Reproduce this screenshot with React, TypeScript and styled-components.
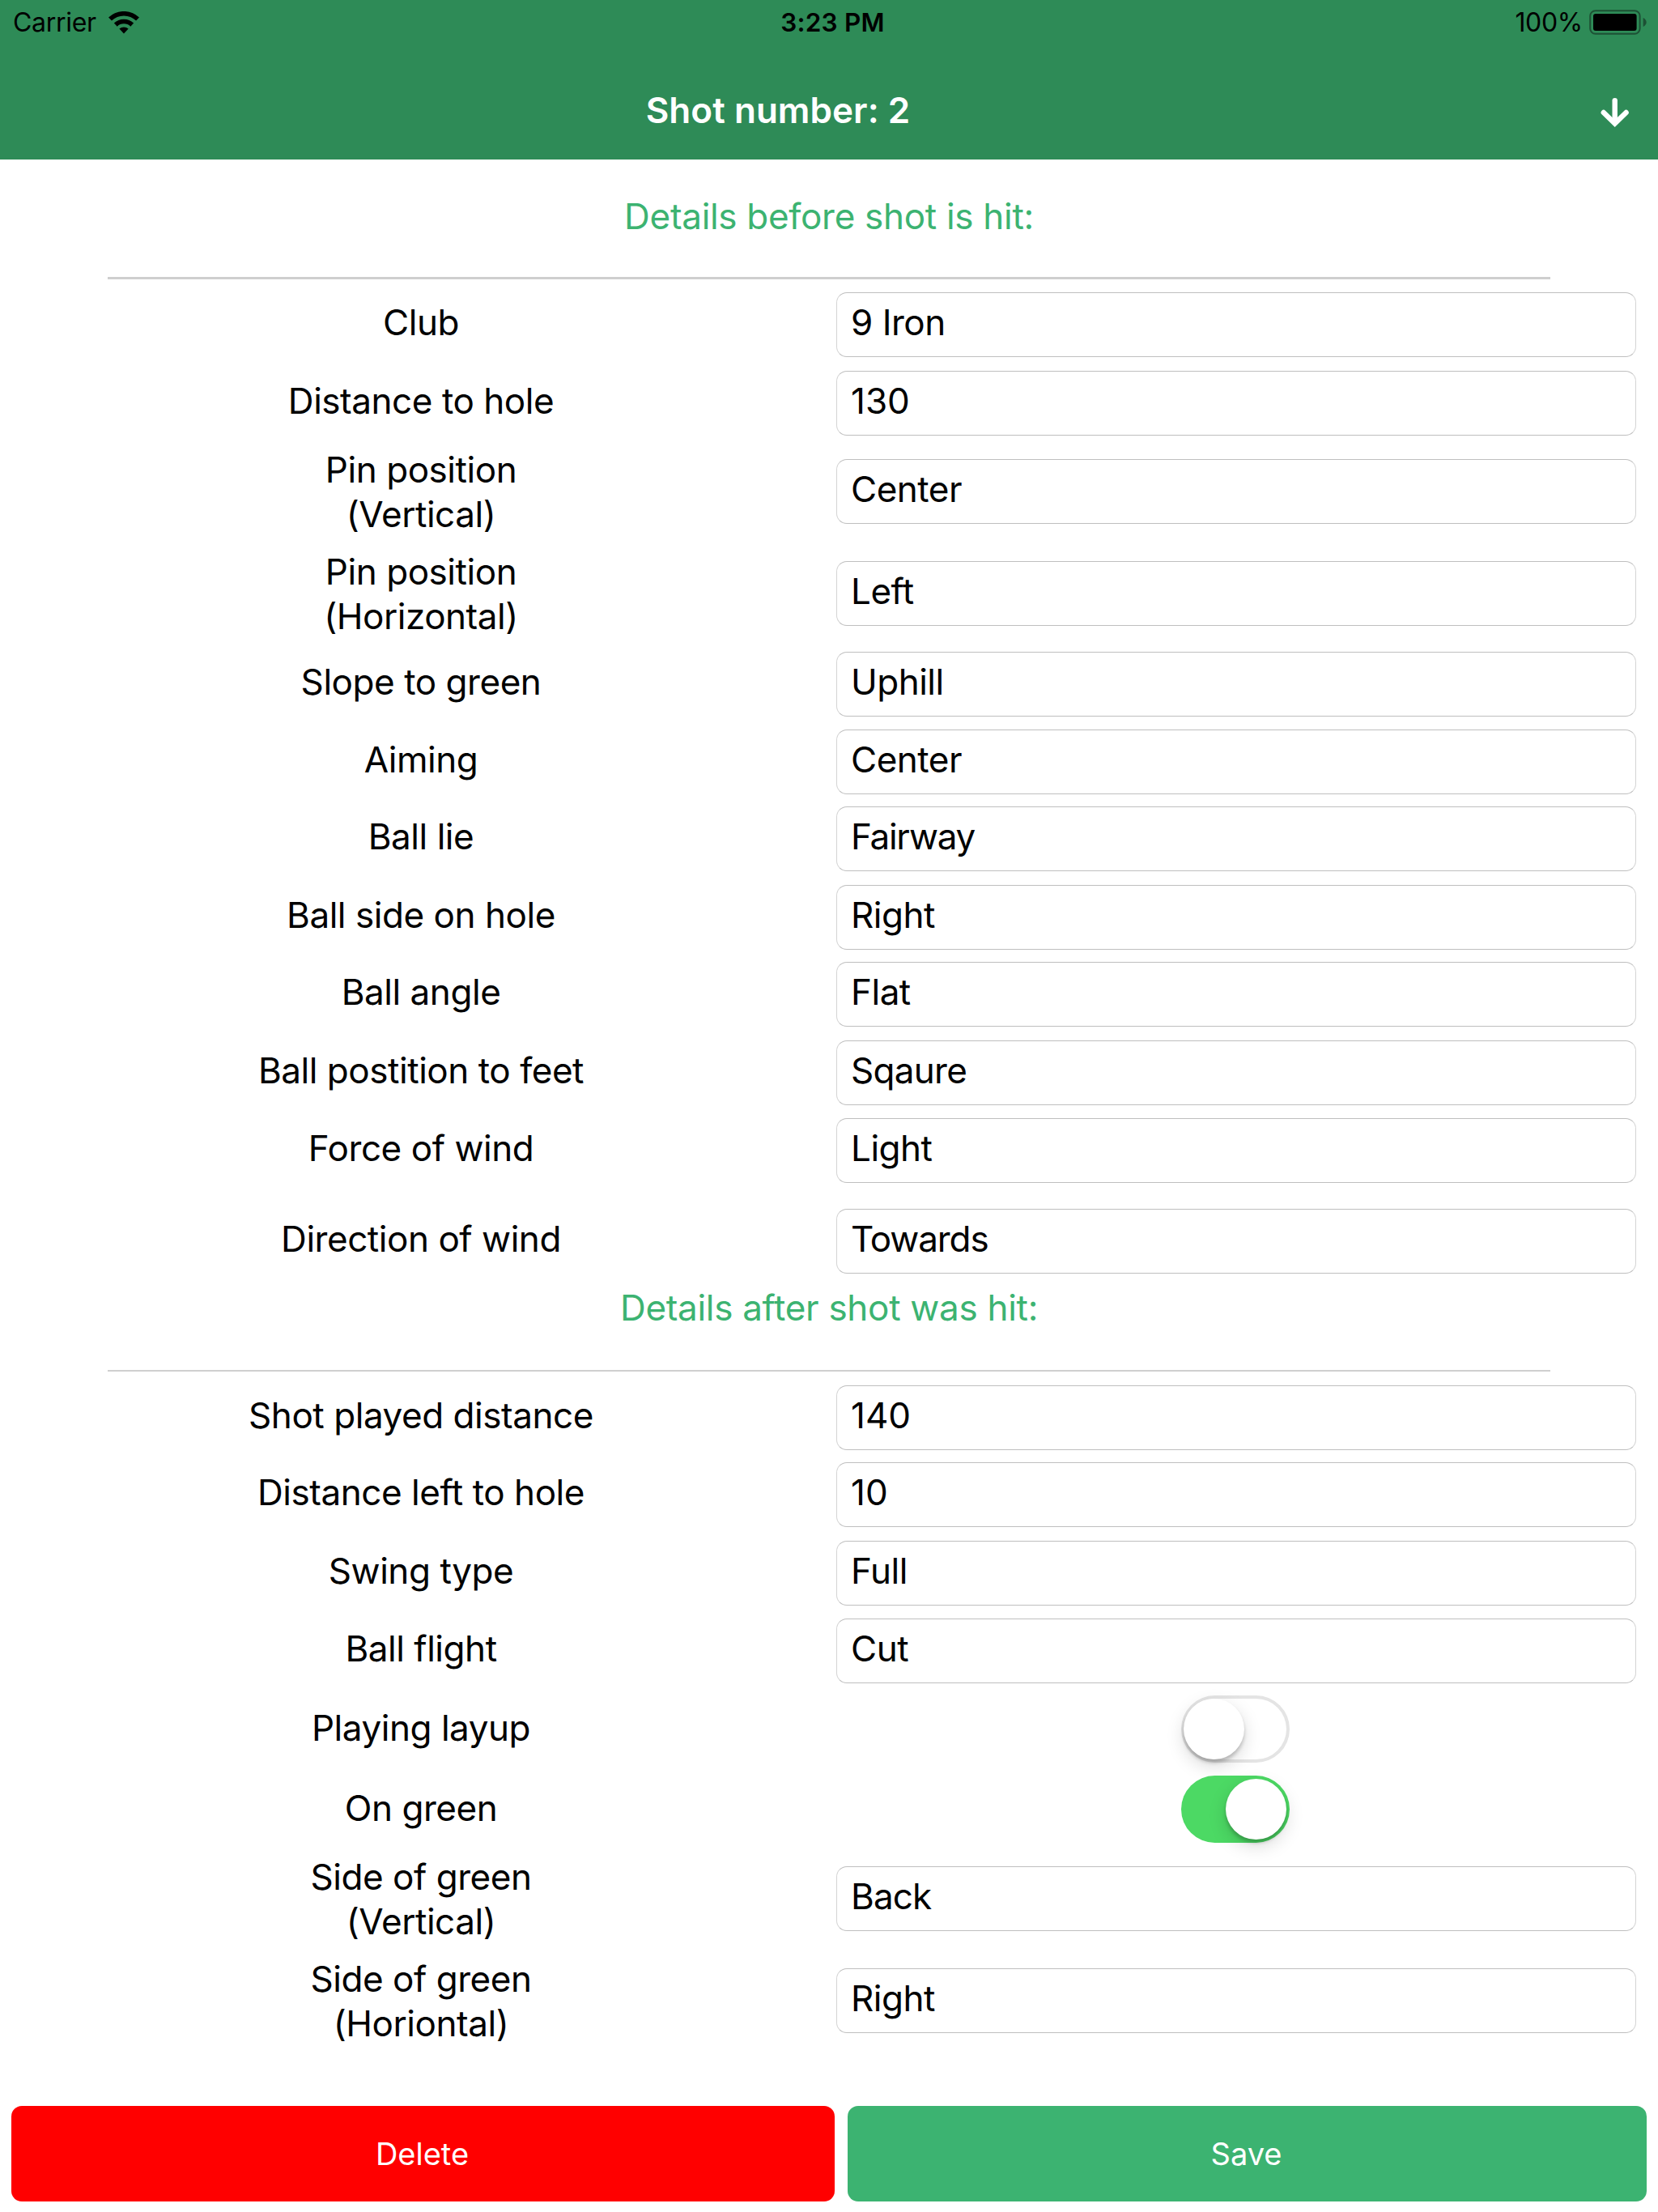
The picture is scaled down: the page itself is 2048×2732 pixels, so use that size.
import React, { useState } from 'react';
import styled, { createGlobalStyle } from 'styled-components';

const Global = createGlobalStyle`
  * { box-sizing: border-box; }
  body { margin: 0; background: #fff; }
`;

const Page = styled.main`
  width: 2048px;
  height: 2732px;
  display: flex;
  flex-direction: column;
  overflow: hidden;
  background: #fff;
  color: #000;
  font-family: Inter, 'Liberation Sans', sans-serif;
  font-size: 44px;
  letter-spacing: -0.45px;
`;

const Header = styled.header`
  height: 197px;
  flex: none;
  display: flex;
  flex-direction: column;
  background: #2e8b57;
`;

const StatusBar = styled.div`
  height: 55px;
  padding: 0 13px 0 16px;
  display: grid;
  grid-template-columns: 1fr auto 1fr;
  align-items: center;
  font-size: 32px;
  letter-spacing: -0.3px;
`;

const Carrier = styled.div`
  display: flex;
  align-items: center;
  gap: 15px;
`;

const Clock = styled.div`
  padding-left: 6px;
  font-weight: 600;
  font-size: 31.5px;
  letter-spacing: 0.2px;
`;

const Power = styled.div`
  display: flex;
  align-items: center;
  justify-content: flex-end;
  gap: 8px;
`;

const TitleBar = styled.div`
  height: 142px;
  padding: 51px 34px 0 0;
  display: flex;
  justify-content: space-between;
  align-items: flex-start;
`;

const Title = styled.h1`
  margin: 0;
  width: 1922px;
  color: #fff;
  font-size: 44px;
  line-height: 60px;
  font-weight: 600;
  letter-spacing: 0.05px;
  text-align: center;
`;

const ArrowButton = styled.button`
  margin: 14px 0 0;
  padding: 0;
  width: 38px;
  height: 40px;
  border: 0;
  background: none;
`;

const Heading = styled.h2<{ $height: number; $top: number; $rule: number }>`
  margin: 0 133px;
  flex: none;
  height: ${(p) => p.$height}px;
  padding-top: ${(p) => p.$top}px;
  border-bottom: ${(p) => p.$rule}px solid #cfcfcf;
  color: #3cb371;
  font-size: 44px;
  line-height: 54px;
  font-weight: 400;
  letter-spacing: -0.3px;
  text-align: center;
`;

const Rows = styled.section<{ $top: number }>`
  display: flex;
  flex-direction: column;
  padding-top: ${(p) => p.$top}px;
`;

const Row = styled.div<{ $height: number }>`
  height: ${(p) => p.$height}px;
  flex: none;
  display: grid;
  grid-template-columns: 1033px 988px;
  align-items: start;
`;

const Label = styled.div<{ $line: number; $top?: number }>`
  padding: ${(p) => p.$top ?? 8}px 0 0 7px;
  white-space: pre-line;
  text-align: center;
  line-height: ${(p) => p.$line}px;
`;

const Field = styled.div<{ $top: number; $tracking: number }>`
  height: 80px;
  margin-top: ${(p) => p.$top}px;
  padding-left: 17px;
  border: 1px solid;
  border-color: #bfbfbf #d4d4d4;
  border-radius: 13px;
  line-height: 73px;
  letter-spacing: ${(p) => p.$tracking}px;
`;

const Switch = styled.button<{ $on: boolean }>`
  width: 134px;
  height: 83px;
  margin: 8px 2px 0 0;
  padding: 0 4px 0 3px;
  justify-self: center;
  display: flex;
  align-items: center;
  justify-content: ${(p) => (p.$on ? 'flex-end' : 'flex-start')};
  border: 0;
  border-radius: 42px;
  background: ${(p) => (p.$on ? '#4cd964' : '#fff')};
  box-shadow: ${(p) => (p.$on ? 'none' : 'inset 0 0 0 4px #e4e4e4')};
`;

const Knob = styled.span`
  width: 75px;
  height: 75px;
  border-radius: 50%;
  background: #fff;
  box-shadow: 0 8px 22px rgba(0, 0, 0, 0.15), 0 4px 4px rgba(0, 0, 0, 0.2);
`;

const Actions = styled.footer`
  margin-top: auto;
  padding: 0 14px 13px;
  display: grid;
  grid-template-columns: 1017px 1fr;
  column-gap: 16px;
`;

const Action = styled.button<{ $color: string }>`
  height: 118px;
  padding: 0 2px 0 0;
  border: 0;
  border-radius: 13px;
  background: ${(p) => p.$color};
  color: #fff;
  font-family: inherit;
  font-size: 38px;
  letter-spacing: 0;
`;

function Wifi() {
  return (
    <svg width="38" height="28" viewBox="0 0 38 28" fill="none" stroke="#000" strokeWidth="5.6">
      <path d="M2 9.6 A 24.5 24.5 0 0 1 36 9.6" />
      <path d="M8.8 16.6 A 14.8 14.8 0 0 1 29.2 16.6" />
      <path d="M13.4 21.6 A 8.4 8.4 0 0 1 24.6 21.6 L 19 27.4 Z" fill="#000" stroke="none" />
    </svg>
  );
}

function Battery() {
  return (
    <svg width="72" height="32" viewBox="0 0 72 32">
      <rect x="1.2" y="1.2" width="61.4" height="28.6" rx="6.5" fill="none" stroke="#1d5034" strokeWidth="2" />
      <rect x="5" y="5" width="53.6" height="21" rx="3" fill="#000" />
      <path d="M66.6 10 C 72 12.5 72 18.5 66.6 21 Z" fill="#1d5034" />
    </svg>
  );
}

function ArrowDown() {
  return (
    <svg width="38" height="40" viewBox="0 0 38 40" fill="none" stroke="#fff" strokeWidth="6.4" strokeLinecap="round">
      <path d="M18.7 4.2 V31" />
      <path d="M4.8 19 L18.7 32.6 L32.6 19" />
    </svg>
  );
}

type Entry = { label: string; value: string; height: number; tracking?: number };

const before: Entry[] = [
  { label: 'Club', value: '9 Iron', height: 97 },
  { label: 'Distance to hole', value: '130', height: 94, tracking: 0 },
  { label: 'Pin position\n(Vertical)', value: 'Center', height: 126 },
  { label: 'Pin position\n(Horizontal)', value: 'Left', height: 127 },
  { label: 'Slope to green', value: 'Uphill', height: 96 },
  { label: 'Aiming', value: 'Center', height: 95 },
  { label: 'Ball lie', value: 'Fairway', height: 97, tracking: -1.3 },
  { label: 'Ball side on hole', value: 'Right', height: 95 },
  { label: 'Ball angle', value: 'Flat', height: 97 },
  { label: 'Ball postition to feet', value: 'Sqaure', height: 96, tracking: -0.7 },
  { label: 'Force of wind', value: 'Light', height: 112 },
  { label: 'Direction of wind', value: 'Towards', height: 88, tracking: -1.1 },
];

const after: Entry[] = [
  { label: 'Shot played distance', value: '140', height: 95, tracking: 0 },
  { label: 'Distance left to hole', value: '10', height: 97, tracking: 0 },
  { label: 'Swing type', value: 'Full', height: 96 },
  { label: 'Ball flight', value: 'Cut', height: 95 },
];

const green: Entry[] = [
  { label: 'Side of green\n(Vertical)', value: 'Back', height: 126, tracking: -0.9 },
  { label: 'Side of green\n(Horiontal)', value: 'Right', height: 126 },
];

function EntryRow({ label, value, height, tracking = -0.5 }: Entry) {
  const tall = label.includes('\n');
  return (
    <Row $height={height}>
      <Label $line={tall ? 55 : 75} $top={tall ? 9 : 8}>{label}</Label>
      <Field $top={tall ? 23 : 8} $tracking={tracking}>{value}</Field>
    </Row>
  );
}

function SwitchRow({ label, height, initial }: { label: string; height: number; initial: boolean }) {
  const [on, setOn] = useState(initial);
  return (
    <Row $height={height}>
      <Label $line={81}>{label}</Label>
      <Switch $on={on} role="switch" aria-checked={on} onClick={() => setOn(!on)}>
        <Knob />
      </Switch>
    </Row>
  );
}

export default function App() {
  return (
    <Page>
      <Global />
      <Header>
        <StatusBar>
          <Carrier>Carrier<Wifi /></Carrier>
          <Clock>3:23 PM</Clock>
          <Power>100%<Battery /></Power>
        </StatusBar>
        <TitleBar>
          <Title>Shot number: 2</Title>
          <ArrowButton><ArrowDown /></ArrowButton>
        </TitleBar>
      </Header>
      <Heading $height={148} $top={43} $rule={3}>Details before shot is hit:</Heading>
      <Rows $top={8}>
        {before.map((e) => <EntryRow key={e.label} {...e} />)}
      </Rows>
      <Heading $height={121} $top={15} $rule={2}>Details after shot was hit:</Heading>
      <Rows $top={9}>
        {after.map((e) => <EntryRow key={e.label} {...e} />)}
        <SwitchRow label="Playing layup" height={99} initial={false} />
        <SwitchRow label="On green" height={97} initial />
        {green.map((e) => <EntryRow key={e.label} {...e} />)}
      </Rows>
      <Actions>
        <Action $color="#f00">Delete</Action>
        <Action $color="#3cb371">Save</Action>
      </Actions>
    </Page>
  );
}
